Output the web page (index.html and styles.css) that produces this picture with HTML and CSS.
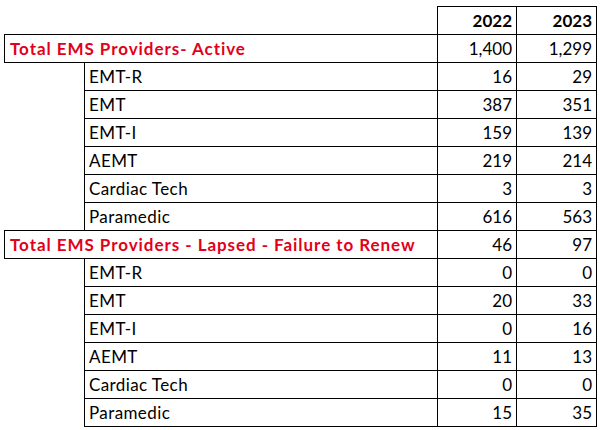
FILE: index.html
```html
<!DOCTYPE html>
<html>
<head>
<meta charset="utf-8">
<link rel="stylesheet" href="styles.css">
</head>
<body>
<table class="sheet">
  <colgroup>
    <col class="c-indent">
    <col class="c-label">
    <col class="c-year">
    <col class="c-year2">
  </colgroup>
  <tr class="head">
    <td class="blank" colspan="2"></td>
    <th class="num">2022</th>
    <th class="num">2023</th>
  </tr>
  <tr class="total">
    <td class="title" colspan="2">Total EMS Providers- Active</td>
    <td class="num">1,400</td>
    <td class="num">1,299</td>
  </tr>
  <tr><td class="blank"></td><td class="label">EMT-R</td><td class="num">16</td><td class="num">29</td></tr>
  <tr><td class="blank"></td><td class="label">EMT</td><td class="num">387</td><td class="num">351</td></tr>
  <tr><td class="blank"></td><td class="label">EMT-I</td><td class="num">159</td><td class="num">139</td></tr>
  <tr><td class="blank"></td><td class="label">AEMT</td><td class="num">219</td><td class="num">214</td></tr>
  <tr><td class="blank"></td><td class="label">Cardiac Tech</td><td class="num">3</td><td class="num">3</td></tr>
  <tr><td class="blank"></td><td class="label">Paramedic</td><td class="num">616</td><td class="num">563</td></tr>
  <tr class="total">
    <td class="title" colspan="2">Total EMS Providers - Lapsed - Failure to Renew</td>
    <td class="num">46</td>
    <td class="num">97</td>
  </tr>
  <tr><td class="blank"></td><td class="label">EMT-R</td><td class="num">0</td><td class="num">0</td></tr>
  <tr><td class="blank"></td><td class="label">EMT</td><td class="num">20</td><td class="num">33</td></tr>
  <tr><td class="blank"></td><td class="label">EMT-I</td><td class="num">0</td><td class="num">16</td></tr>
  <tr><td class="blank"></td><td class="label">AEMT</td><td class="num">11</td><td class="num">13</td></tr>
  <tr><td class="blank"></td><td class="label">Cardiac Tech</td><td class="num">0</td><td class="num">0</td></tr>
  <tr><td class="blank"></td><td class="label">Paramedic</td><td class="num">15</td><td class="num">35</td></tr>
</table>
</body>
</html>
```

FILE: styles.css
```css
html, body {
  margin: 0;
  padding: 0;
  background: #ffffff;
}

body {
  font-family: Lato, "Liberation Sans", sans-serif;
  font-size: 17px;
  color: #000000;
}

.sheet {
  margin: 6px 0 0 4px;
  border-collapse: collapse;
  table-layout: fixed;
  width: 593px;
}

.c-indent { width: 80px; }
.c-label { width: 353px; }
.c-year { width: 79px; }
.c-year2 { width: 80px; }

.sheet tr {
  height: 28px;
}

.sheet td,
.sheet th {
  border: 1px solid #000000;
  padding: 0 4px 0 5px;
  line-height: 27px;
  height: 27px;
  white-space: nowrap;
  overflow: hidden;
  box-sizing: border-box;
}

.sheet td.blank {
  border: none;
}

.sheet .num {
  text-align: right;
  padding-right: 4px;
}

.sheet th {
  font-weight: 700;
  color: #000000;
}

.sheet .label {
  padding-left: 4px;
  letter-spacing: 0.4px;
}

.sheet .title {
  color: #e2001a;
  font-weight: 700;
  letter-spacing: 0.95px;
}
```
